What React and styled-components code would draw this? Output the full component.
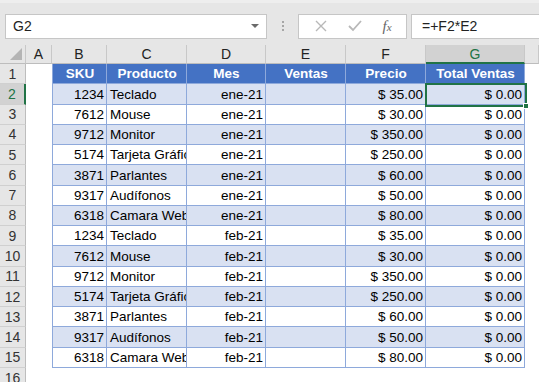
import styled, { createGlobalStyle } from "styled-components";

const GlobalStyle = createGlobalStyle`
  html, body {
    margin: 0;
    padding: 0;
    overflow: hidden;
    background: #ffffff;
  }
  * {
    box-sizing: border-box;
  }
`;

const ExcelWindow = styled.div`
  width: 539px;
  height: 382px;
  overflow: hidden;
  font-family: "Liberation Sans", Arial, sans-serif;
  background: #ffffff;
`;

const FormulaBar = styled.div`
  display: flex;
  align-items: center;
  height: 45px;
  padding: 6px 0 2px 5px;
  background: #e6e6e6;
  border-top: 3px solid #eeeeee;
`;

const NameBox = styled.div`
  display: flex;
  align-items: center;
  justify-content: space-between;
  width: 262px;
  height: 25px;
  padding: 0 7px 0 7px;
  background: #ffffff;
  border: 1px solid #c6c6c6;
  font-size: 14px;
  color: #222;
`;

const DropArrow = styled.span`
  width: 0;
  height: 0;
  border-left: 4px solid transparent;
  border-right: 4px solid transparent;
  border-top: 4px solid #6a6a6a;
`;

const Grip = styled.div`
  display: flex;
  flex-direction: column;
  align-items: center;
  gap: 2px;
  width: 31px;
  span {
    width: 2px;
    height: 2px;
    background: #a6a6a6;
  }
`;

const ButtonBox = styled.div`
  display: flex;
  align-items: center;
  justify-content: space-around;
  width: 109px;
  height: 25px;
  padding: 0 4px 0 6px;
  background: #ffffff;
  border: 1px solid #c6c6c6;
`;

const FxLabel = styled.span`
  font-family: "Liberation Serif", "Times New Roman", serif;
  font-style: italic;
  font-size: 15px;
  color: #666;
  sub {
    font-size: 11px;
    vertical-align: baseline;
  }
`;

const FormulaInput = styled.div`
  display: flex;
  align-items: center;
  flex: 1;
  height: 25px;
  margin-left: 4px;
  margin-right: -4px;
  padding-left: 10px;
  background: #ffffff;
  border: 1px solid #c6c6c6;
  font-size: 14px;
  color: #222;
`;

const Sheet = styled.div`
  display: grid;
  grid-template-columns: 26px 26px 55px 80px 79px 80px 80px 99px 1fr;
  grid-template-rows: 19px repeat(16, 20.27px);
  background: #ffffff;
`;

const Corner = styled.div`
  position: relative;
  background: #e6e6e6;
  border-right: 1px solid #c8c8c8;
  border-bottom: 1px solid #bdbdbd;
  &::after {
    content: "";
    position: absolute;
    right: 3px;
    bottom: 3px;
    width: 0;
    height: 0;
    border-left: 12px solid transparent;
    border-bottom: 12px solid #b4b4b4;
  }
`;

const ColHeader = styled.div`
  display: flex;
  align-items: center;
  justify-content: center;
  font-size: 14px;
  color: ${(p) => (p.$active ? "#217346" : "#222")};
  background: ${(p) => (p.$active ? "#d2d2d2" : "#e6e6e6")};
  border-right: 1px solid #c8c8c8;
  border-bottom: ${(p) => (p.$active ? "2px solid #217346" : "1px solid #bdbdbd")};
`;

const RowHeader = styled.div`
  display: flex;
  align-items: center;
  justify-content: center;
  font-size: 14px;
  color: ${(p) => (p.$active ? "#217346" : "#333")};
  background: ${(p) => (p.$active ? "#d2d2d2" : "#e6e6e6")};
  border-bottom: 1px solid #d0d0d0;
  border-right: ${(p) => (p.$active ? "2px solid #217346" : "1px solid #bdbdbd")};
`;

const EmptyCell = styled.div`
  background: #ffffff;
`;

const Cell = styled.div`
  position: relative;
  display: flex;
  align-items: flex-end;
  justify-content: ${(p) =>
    p.$align === "right" ? "flex-end" : p.$align === "center" ? "center" : "flex-start"};
  padding: 0 2px 1px 3px;
  overflow: hidden;
  white-space: nowrap;
  font-size: 13.5px;
  line-height: 17px;
  color: #000;
  background: ${(p) => (p.$band ? "#d9e1f2" : "#ffffff")};
  border-right: 1px solid #8ea9db;
  border-bottom: 1px solid #8ea9db;
  border-left: ${(p) => (p.$first ? "1px solid #8ea9db" : "none")};
`;

const HeadCell = styled(Cell)`
  justify-content: center;
  font-weight: bold;
  color: #ffffff;
  background: #4472c4;
`;

const Selection = styled.div`
  position: absolute;
  left: -1px;
  top: -1px;
  right: -2px;
  bottom: -2px;
  border: 2px solid #217346;
  pointer-events: none;
`;

const Handle = styled.div`
  position: absolute;
  right: -4px;
  bottom: -4px;
  width: 6px;
  height: 6px;
  background: #217346;
  border: 1px solid #ffffff;
`;

const SelectedWrap = styled.div`
  position: relative;
  display: flex;
  z-index: 2;
  & > ${Cell} {
    flex: 1;
  }
`;

const columns = ["A", "B", "C", "D", "E", "F", "G", ""];

const headers = ["SKU", "Producto", "Mes", "Ventas", "Precio", "Total Ventas"];

const rows = [
  ["1234", "Teclado", "ene-21", "35.00"],
  ["7612", "Mouse", "ene-21", "30.00"],
  ["9712", "Monitor", "ene-21", "350.00"],
  ["5174", "Tarjeta Gráfica", "ene-21", "250.00"],
  ["3871", "Parlantes", "ene-21", "60.00"],
  ["9317", "Audífonos", "ene-21", "50.00"],
  ["6318", "Camara Web", "ene-21", "80.00"],
  ["1234", "Teclado", "feb-21", "35.00"],
  ["7612", "Mouse", "feb-21", "30.00"],
  ["9712", "Monitor", "feb-21", "350.00"],
  ["5174", "Tarjeta Gráfica", "feb-21", "250.00"],
  ["3871", "Parlantes", "feb-21", "60.00"],
  ["9317", "Audífonos", "feb-21", "50.00"],
  ["6318", "Camara Web", "feb-21", "80.00"],
];

const CloseIcon = () => (
  <svg width="12" height="12" viewBox="0 0 12 12">
    <path d="M1 1 L11 11 M11 1 L1 11" stroke="#b8b8b8" strokeWidth="1.4" />
  </svg>
);

const CheckIcon = () => (
  <svg width="14" height="12" viewBox="0 0 14 12">
    <path d="M1 6 L5 10 L13 1" stroke="#b8b8b8" strokeWidth="1.8" fill="none" />
  </svg>
);

const DataRow = ({ row, index }) => {
  const band = index % 2 === 0;
  const selected = index === 0;
  const total = (
    <Cell $band={band} $align="right">
      $ 0.00
    </Cell>
  );
  return (
    <>
      <RowHeader $active={selected}>{index + 2}</RowHeader>
      <EmptyCell />
      <Cell $band={band} $align="right" $first>
        {row[0]}
      </Cell>
      <Cell $band={band}>{row[1]}</Cell>
      <Cell $band={band} $align="right">
        {row[2]}
      </Cell>
      <Cell $band={band} />
      <Cell $band={band} $align="right">
        $ {row[3]}
      </Cell>
      {selected ? (
        <SelectedWrap>
          {total}
          <Selection />
          <Handle />
        </SelectedWrap>
      ) : (
        total
      )}
      <EmptyCell />
    </>
  );
};

const App = () => {
  return (
    <ExcelWindow>
      <GlobalStyle />
      <FormulaBar>
        <NameBox>
          G2
          <DropArrow />
        </NameBox>
        <Grip>
          <span />
          <span />
          <span />
        </Grip>
        <ButtonBox>
          <CloseIcon />
          <CheckIcon />
          <FxLabel>
            f<sub>x</sub>
          </FxLabel>
        </ButtonBox>
        <FormulaInput>=+F2*E2</FormulaInput>
      </FormulaBar>
      <Sheet>
        <Corner />
        {columns.map((c, i) => (
          <ColHeader key={i} $active={c === "G"}>
            {c}
          </ColHeader>
        ))}

        <RowHeader>1</RowHeader>
        <EmptyCell />
        {headers.map((h, i) => (
          <HeadCell key={h} $first={i === 0}>
            {h}
          </HeadCell>
        ))}
        <EmptyCell />

        {rows.map((r, i) => (
          <DataRow key={i} row={r} index={i} />
        ))}

        <RowHeader>16</RowHeader>
      </Sheet>
    </ExcelWindow>
  );
};

export default App;
